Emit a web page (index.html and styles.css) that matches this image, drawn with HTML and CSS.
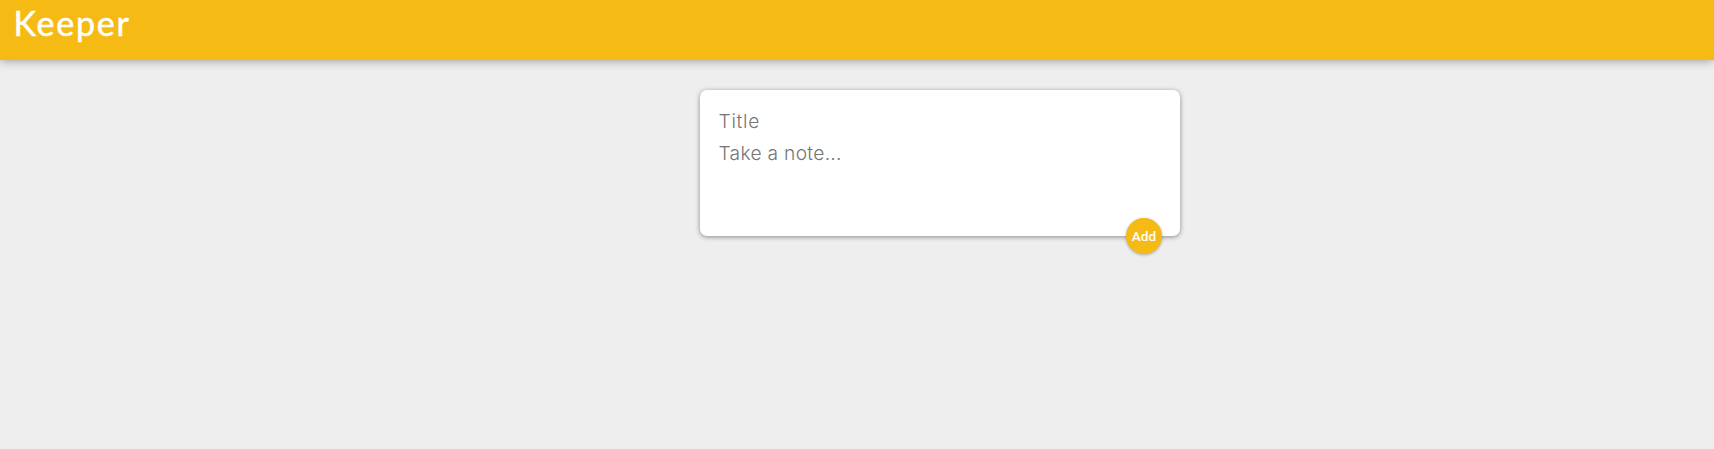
FILE: index.html
```
<!DOCTYPE html>
<html lang="en">
<head>
<meta charset="utf-8">
<title>Keeper</title>
<link rel="stylesheet" href="styles.css">
</head>
<body>
<header class="header"><h1 class="brand">Keeper</h1></header>
<main class="main">
<form class="note-form">
<input class="note-title" name="title" placeholder="Title">
<textarea class="note-content" name="content" placeholder="Take a note..." rows="3"></textarea>
<button class="add" type="button">Add</button>
</form>
</main>
</body>
</html>
```
FILE: styles.css
```
* { box-sizing: border-box; margin: 0; padding: 0; }
html { height: 100%; }
body { min-height: 100%; background: #eee; font-family: "Liberation Sans", sans-serif; }
.header { height: 60px; padding: 0 13.5px; background: #f5ba13; box-shadow: 0 0 10px rgba(0,0,0,.4); }
.brand { color: #fff; font: 400 34px/46px Lato, sans-serif; letter-spacing: 1.75px; -webkit-text-stroke: .5px #fff; }
.main { padding: 30px 534px 0 700px; }
.note-form { position: relative; width: 480px; height: 146px; padding: 15px 15px 0; background: #fff; border-radius: 7px; box-shadow: 0 1px 5px rgb(138,137,137); }
.note-title, .note-content { display: block; width: 100%; border: 0; outline: 0; padding: 4px 3.5px; font: 300 19.2px/24px Inter, sans-serif; letter-spacing: .3px; resize: none; background: transparent; }
.note-title { letter-spacing: .7px; }
.note-title::placeholder, .note-content::placeholder { color: #757575; }
.add { position: absolute; right: 18px; bottom: -18px; width: 36px; height: 36px; border: 0; border-radius: 50%; background: #f5ba13; color: #fff; box-shadow: 0 1px 3px rgba(0,0,0,.3); font: 500 13.6px Roboto, sans-serif; }
```
